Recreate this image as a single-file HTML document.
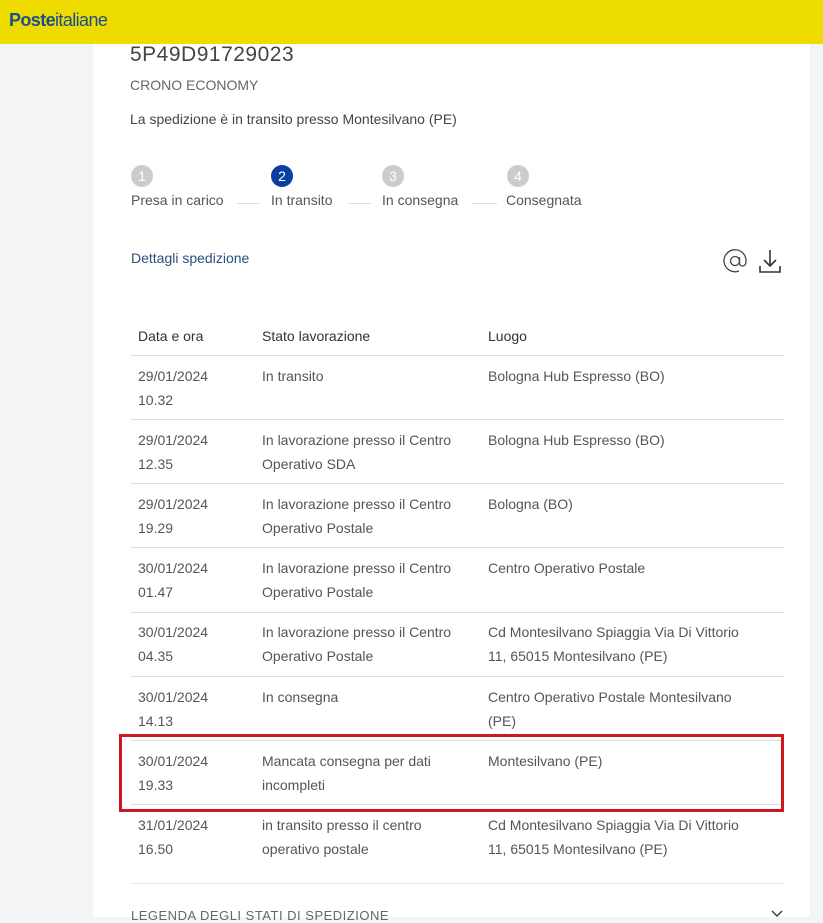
<!DOCTYPE html>
<html><head><meta charset="utf-8"><style>
*{margin:0;padding:0;box-sizing:border-box}
body{width:823px;height:917px;overflow:hidden;background:#f3f4f5;font-family:"Liberation Sans",sans-serif;color:#555;position:relative}
.top{position:absolute;left:0;top:0;width:823px;height:44px;background:#eedc00}
.logo{position:absolute;left:9px;top:10px;font-size:18px;color:#1c4f8a;letter-spacing:-0.6px}
.logo b{font-weight:bold}
.main{position:absolute;left:93px;top:44px;width:717px;height:873px;background:#fff}
.a{position:absolute;white-space:nowrap}
.t{font-size:14px;color:#555}
.circ{position:absolute;width:22px;height:22px;border-radius:50%;background:#ccc;color:#fff;font-size:14px;text-align:center;line-height:22px}
.ln{position:absolute;height:1px;background:#ddd}
.row{position:absolute;left:138px;font-size:14px;line-height:24px;color:#555}
</style></head><body>
<div class="top"><div class="logo"><b>Poste</b>italiane</div></div>
<div class="main"></div>
<div class="a" style="left:130px;top:43px;font-size:21px;color:#444;letter-spacing:0.5px">5P49D91729023</div>
<div class="a t" style="left:130px;top:77px;color:#666">CRONO ECONOMY</div>
<div class="a t" style="left:130px;top:111px;color:#444">La spedizione è in transito presso Montesilvano (PE)</div>
<div class="circ" style="left:131px;top:165px">1</div>
<div class="circ" style="left:271px;top:165px;background:#0a3ea0">2</div>
<div class="circ" style="left:382px;top:165px">3</div>
<div class="circ" style="left:507px;top:165px">4</div>
<div class="a t" style="left:131px;top:192px">Presa in carico</div>
<div class="ln" style="left:237px;top:203px;width:23px"></div>
<div class="a t" style="left:271px;top:192px">In transito</div>
<div class="ln" style="left:348px;top:203px;width:23px"></div>
<div class="a t" style="left:382px;top:192px">In consegna</div>
<div class="ln" style="left:472px;top:203px;width:25px"></div>
<div class="a t" style="left:506px;top:192px">Consegnata</div>
<div class="a t" style="left:131px;top:250px;color:#2a4f7a">Dettagli spedizione</div>
<svg class="a" style="left:722px;top:248px" width="26" height="26" viewBox="0 0 26 26" fill="none" stroke="#444" stroke-width="1.3"><circle cx="13" cy="13" r="4.5"/><path d="M17.5 9v6q0 3 3 3q3.5 0 3.5-5A11 11 0 1 0 17 23"/></svg>
<svg class="a" style="left:758px;top:248px" width="24" height="26" viewBox="0 0 24 26" fill="none" stroke="#333" stroke-width="1.6"><path d="M12 2v16M6 12l6 6 6-6M2 18v6h20v-6"/></svg>
<div class="a t" style="left:138px;top:328px;color:#333">Data e ora</div>
<div class="a t" style="left:262px;top:328px;color:#333">Stato lavorazione</div>
<div class="a t" style="left:488px;top:328px;color:#333">Luogo</div>
<div class="ln" style="left:131px;top:355px;width:653px"></div>
<div class="row" style="top:364px"><span class="a" style="left:0">29/01/2024<br>10.32</span><span class="a" style="left:124px">In transito</span><span class="a" style="left:350px">Bologna Hub Espresso (BO)</span></div>
<div class="ln" style="left:131px;top:419px;width:653px"></div>
<div class="row" style="top:428px"><span class="a" style="left:0">29/01/2024<br>12.35</span><span class="a" style="left:124px">In lavorazione presso il Centro<br>Operativo SDA</span><span class="a" style="left:350px">Bologna Hub Espresso (BO)</span></div>
<div class="ln" style="left:131px;top:483px;width:653px"></div>
<div class="row" style="top:492px"><span class="a" style="left:0">29/01/2024<br>19.29</span><span class="a" style="left:124px">In lavorazione presso il Centro<br>Operativo Postale</span><span class="a" style="left:350px">Bologna (BO)</span></div>
<div class="ln" style="left:131px;top:547px;width:653px"></div>
<div class="row" style="top:556px"><span class="a" style="left:0">30/01/2024<br>01.47</span><span class="a" style="left:124px">In lavorazione presso il Centro<br>Operativo Postale</span><span class="a" style="left:350px">Centro Operativo Postale</span></div>
<div class="ln" style="left:131px;top:612px;width:653px"></div>
<div class="row" style="top:620px"><span class="a" style="left:0">30/01/2024<br>04.35</span><span class="a" style="left:124px">In lavorazione presso il Centro<br>Operativo Postale</span><span class="a" style="left:350px">Cd Montesilvano Spiaggia Via Di Vittorio<br>11, 65015 Montesilvano (PE)</span></div>
<div class="ln" style="left:131px;top:676px;width:653px"></div>
<div class="row" style="top:685px"><span class="a" style="left:0">30/01/2024<br>14.13</span><span class="a" style="left:124px">In consegna</span><span class="a" style="left:350px">Centro Operativo Postale Montesilvano<br>(PE)</span></div>
<div class="ln" style="left:131px;top:740px;width:653px"></div>
<div class="row" style="top:749px"><span class="a" style="left:0">30/01/2024<br>19.33</span><span class="a" style="left:124px">Mancata consegna per dati<br>incompleti</span><span class="a" style="left:350px">Montesilvano (PE)</span></div>
<div class="ln" style="left:131px;top:804px;width:653px"></div>
<div class="a" style="left:119px;top:734px;width:665px;height:78px;border:3px solid #d0161f"></div>
<div class="row" style="top:813px"><span class="a" style="left:0">31/01/2024<br>16.50</span><span class="a" style="left:124px">in transito presso il centro<br>operativo postale</span><span class="a" style="left:350px">Cd Montesilvano Spiaggia Via Di Vittorio<br>11, 65015 Montesilvano (PE)</span></div>
<div class="ln" style="left:131px;top:883px;width:653px;background:#e6e6e6"></div>
<div class="a" style="left:131px;top:908px;font-size:13px;color:#666;letter-spacing:0.5px">LEGENDA DEGLI STATI DI SPEDIZIONE</div>
<svg class="a" style="left:771px;top:910px" width="12" height="8" viewBox="0 0 12 8" fill="none" stroke="#444" stroke-width="1.5"><path d="M1 1l5 5 5-5"/></svg>
</body></html>
